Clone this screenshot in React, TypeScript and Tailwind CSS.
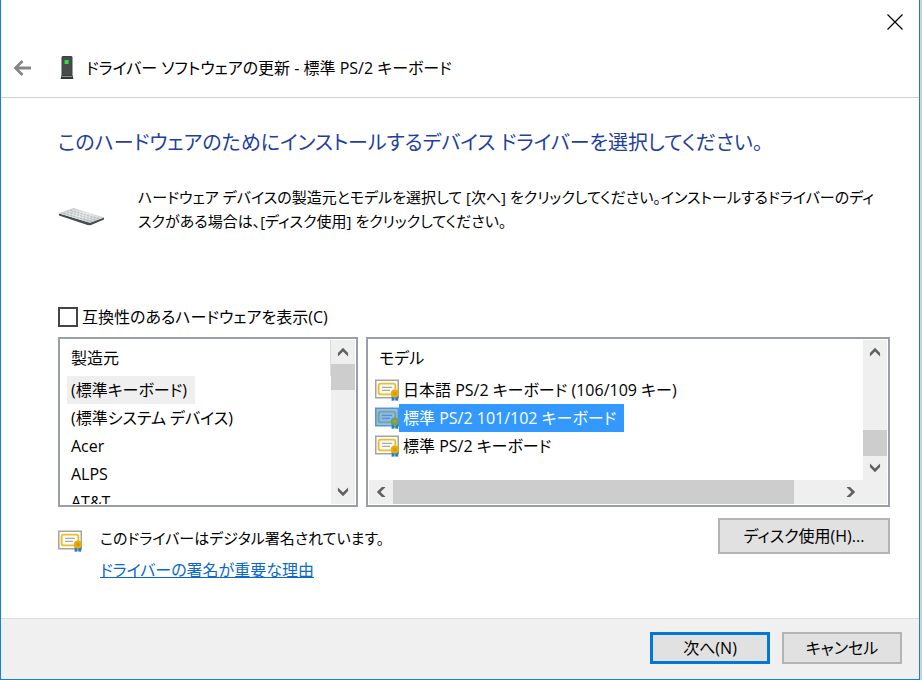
import { useState } from 'react'

const makers = ['(標準キーボード)', '(標準システム デバイス)', 'Acer', 'ALPS', 'AT&T']

const models = [
  '日本語 PS/2 キーボード (106/109 キー)',
  '標準 PS/2 101/102 キーボード',
  '標準 PS/2 キーボード',
]

type Direction = 'up' | 'down' | 'left' | 'right'

const arrowPaths: Record<Direction, string> = {
  up: 'M1 7.5 6.5 2 12 7.5V11.5L6.5 6 1 11.5z',
  down: 'M1 5.5 6.5 11 12 5.5V1.5L6.5 7 1 1.5z',
  left: 'M7.5 1 2 6.5 7.5 12H11.5L6 6.5 11.5 1z',
  right: 'M5.5 1 11 6.5 5.5 12H1.5L7 6.5 1.5 1z',
}

const arrowLabels: Record<Direction, string> = {
  up: '上へスクロール',
  down: '下へスクロール',
  left: '左へスクロール',
  right: '右へスクロール',
}

function ScrollButton({ direction }: { direction: Direction }) {
  return (
    <button
      type="button"
      aria-label={arrowLabels[direction]}
      className="flex size-6 shrink-0 items-center justify-center"
    >
      <svg width="12" height="12" viewBox="0 0 13 13" fill="#606060">
        <path d={arrowPaths[direction]} />
      </svg>
    </button>
  )
}

function CertificateIcon({ selected = false }: { selected?: boolean }) {
  return (
    <svg width="24" height="22" viewBox="0 0 24 22" className="shrink-0" aria-hidden="true">
      <rect x="0.75" y="1.25" width="22.5" height="17.5" fill={selected ? '#8fc0f5' : '#fff'} stroke={selected ? '#5a94cf' : '#a3a3a3'} strokeWidth="1.5" />
      <rect x="3.6" y="4.6" width="16.8" height="10.8" rx="2" fill={selected ? '#86b9ee' : '#fffdf5'} stroke={selected ? '#7fa387' : '#edbd2b'} strokeWidth="1.9" />
      <path d="M7 8.4h10M7 11.4h8" stroke={selected ? '#5f8fbd' : '#a9a9a9'} strokeWidth="1.2" />
      <path d="M16.6 15.5h3v6l-3 .2zM20.2 15.5h3v6.2l-3-.2z" fill={selected ? '#1f78d8' : '#2d7cc0'} />
      {selected && <path d="M18.3 18h3l-1.5 3z" fill="#63c043" />}
      <circle cx="19.8" cy="14.4" r="4" fill={selected ? '#7c9c55' : '#e6ae0c'} />
      <circle cx="19.8" cy="14.4" r="1.8" fill={selected ? '#8aa75c' : '#d99c00'} />
    </svg>
  )
}

function DeviceIcon() {
  return (
    <svg width="14" height="24" viewBox="0 0 14 24" className="shrink-0" aria-hidden="true">
      <path d="M1.5 1 2.5 0h9l1 1v19h-11z" fill="#3c4043" />
      <path d="M2.5 1h9v18h-9z" fill="#484c4f" />
      <rect x="4.6" y="4" width="4" height="4" fill="#27e23a" />
      <path d="M1.5 19.5h11l1 3.5H.5z" fill="#33373a" />
      <path d="M2 20.5h10" stroke="#a7abae" strokeWidth="0.8" />
    </svg>
  )
}

function KeyboardIcon() {
  return (
    <svg width="48" height="22" viewBox="0 0 48 22" className="mt-4 shrink-0" aria-hidden="true">
      <defs>
        <linearGradient id="keys" x1="0" y1="0" x2="1" y2="1">
          <stop offset="0" stopColor="#b9bcbe" />
          <stop offset="0.5" stopColor="#e4e6e7" />
          <stop offset="1" stopColor="#b4b8ba" />
        </linearGradient>
      </defs>
      <path d="M1 7.5 32 16.5 46 11.6v2L32.5 19.2l-3-.3L1 9.6z" fill="#454d51" />
      <path d="M1 7.3 15.5 2 46 11.4 32 17z" fill="url(#keys)" />
      <path
        d="M5.5 7.4 34 15.5M9 6.1l28.5 8.1M12.5 4.8 41 12.8"
        stroke="#b4b8bb"
        strokeWidth="0.9"
        strokeDasharray="2.3 1.1"
      />
      <path d="M7.5 6.4 36 14.5M11 5.2 39.5 13.3M14.5 4 43 12" stroke="#f0f1f1" strokeWidth="0.7" strokeDasharray="2.3 1.1" />
    </svg>
  )
}

export default function App() {
  const [maker, setMaker] = useState(0)
  const [model, setModel] = useState(1)
  const [compatible, setCompatible] = useState(false)

  return (
    <div className="min-h-screen bg-[#d2d2d2] pr-0.5 font-['Open_Sans','Noto_Sans_CJK_JP',sans-serif] text-base text-black [font-feature-settings:'palt']">
      <main className="flex min-h-screen flex-col border-x border-b border-[#1a7fd4] bg-white">
        <header className="border-b border-[#cfcfcf]">
          <div className="flex justify-end px-3.5 pt-3">
            <button type="button" aria-label="閉じる" className="flex size-5 items-center justify-center">
              <svg width="16" height="16" viewBox="0 0 16 16" stroke="#000" strokeWidth="1.2">
                <path d="m.5.5 15 15M15.5.5l-15 15" />
              </svg>
            </button>
          </div>
          <div className="flex items-center pt-[22px] pb-[15px] pl-3">
            <button type="button" aria-label="戻る" className="mr-7">
              <svg width="19" height="18" viewBox="0 0 19 18" fill="none" stroke="#868686" strokeWidth="2.8">
                <path d="M18 9H2.5M9.5 2 2.5 9l7 7" />
              </svg>
            </button>
            <DeviceIcon />
            <h1 className="ml-3 leading-7">ドライバー ソフトウェアの更新 - 標準 PS/2 キーボード</h1>
          </div>
        </header>

        <section className="flex-1 pt-[29px] pr-[29px] pb-6 pl-[57px]">
          <h2 className="text-xl leading-8 text-[#1f3f9f]">
            このハードウェアのためにインストールするデバイス ドライバーを選択してください。
          </h2>

          <div className="mt-[26px] flex items-center">
            <KeyboardIcon />
            <p className="ml-8 text-[15px] leading-6">
              ハードウェア デバイスの製造元とモデルを選択して [次へ] をクリックしてください。インストールするドライバーのディ
              <br />
              スクがある場合は、[ディスク使用] をクリックしてください。
            </p>
          </div>

          <label className="mt-18 flex items-center gap-1 leading-6">
            <input
              type="checkbox"
              checked={compatible}
              onChange={(e) => setCompatible(e.target.checked)}
              className="size-5 appearance-none border-2 border-[#444] bg-white checked:bg-[#0078d7]"
            />
            互換性のあるハードウェアを表示(C)
          </label>

          <div className="mt-2 flex h-[170px] gap-2 leading-7">
            <div className="flex w-[300px] border-2 border-[#9a9ea7] p-px">
              <div className="min-w-0 flex-1 overflow-hidden pl-1.5">
                <div className="border-r border-[#dcdcdc] px-1 py-1">製造元</div>
                <ul className="flex flex-col items-start">
                  {makers.map((name, i) => (
                    <li key={name}>
                      <button
                        type="button"
                        aria-pressed={i === maker}
                        onClick={() => setMaker(i)}
                        className={`block h-7 pl-1 pr-2 ${i === maker ? 'bg-[#efefef]' : ''}`}
                      >
                        {name}
                      </button>
                    </li>
                  ))}
                </ul>
              </div>
              <div className="flex w-6 flex-col bg-[#efefef]">
                <ScrollButton direction="up" />
                <div className="h-[26px] bg-[#cdcdcd]" />
                <div className="flex-1" />
                <ScrollButton direction="down" />
              </div>
            </div>

            <div className="flex min-w-0 flex-1 flex-col border-2 border-[#9a9ea7] p-px">
              <div className="flex min-h-0 flex-1">
                <div className="min-w-0 flex-1 overflow-hidden pl-1.5">
                  <div className="px-1 py-1">モデル</div>
                  <ul className="flex flex-col items-start">
                    {models.map((name, i) => (
                      <li key={name}>
                        <button
                          type="button"
                          aria-pressed={i === model}
                          onClick={() => setModel(i)}
                          className="flex h-7 items-center"
                        >
                          <CertificateIcon selected={i === model} />
                          <span className={`pr-2 pl-1 ${i === model ? 'bg-[#3399ff] text-white' : ''}`}>{name}</span>
                        </button>
                      </li>
                    ))}
                  </ul>
                </div>
                <div className="flex w-6 flex-col bg-[#efefef]">
                  <ScrollButton direction="up" />
                  <div className="flex-1" />
                  <div className="h-[26px] bg-[#cdcdcd]" />
                  <ScrollButton direction="down" />
                </div>
              </div>
              <div className="flex h-6 bg-[#efefef] pr-6">
                <ScrollButton direction="left" />
                <div className="flex flex-1">
                  <div className="w-[90%] bg-[#cdcdcd]" />
                </div>
                <ScrollButton direction="right" />
              </div>
            </div>
          </div>

          <div className="mt-[11px] flex items-start">
            <div className="pt-3">
              <CertificateIcon />
            </div>
            <div className="ml-4.5 flex-1 pt-1 leading-8">
              <p className="text-[15px] leading-8">このドライバーはデジタル署名されています。</p>
              <a href="#signing" className="text-[#0a6acb] underline">
                ドライバーの署名が重要な理由
              </a>
            </div>
            <button type="button" className="h-9 w-[172px] border-2 border-[#b4b4b4] bg-[#e1e1e1]">
              ディスク使用(H)...
            </button>
          </div>
        </section>

        <footer className="flex justify-end gap-3 border-t border-[#dfdfdf] bg-[#f0f0f0] pt-[13px] pr-[17px] pb-[15px] pl-4">
          <button type="button" className="h-8 w-[120px] border-3 border-[#0078d7] bg-[#e1e1e1] leading-6">
            次へ(N)
          </button>
          <button type="button" className="h-8 w-[120px] border-2 border-[#b4b4b4] bg-[#e1e1e1] leading-6">
            キャンセル
          </button>
        </footer>
      </main>
    </div>
  )
}
